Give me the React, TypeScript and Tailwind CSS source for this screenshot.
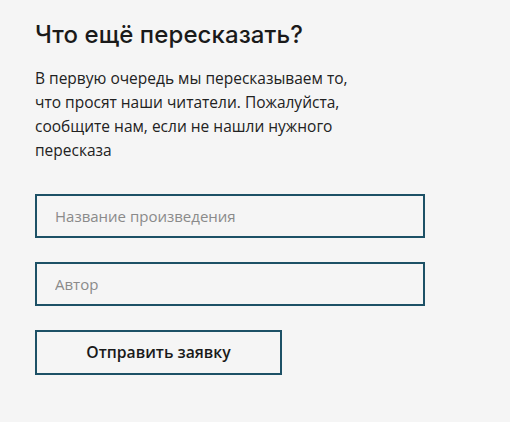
export default function App() {
  return (
    <div className="min-h-[422px] w-full bg-[#f5f5f5] px-[35px] pt-[20px] font-['Open_Sans',sans-serif]">
      <h2 className="font-['Inter',sans-serif] text-[24px] font-medium leading-[30px] tracking-[0.1px] text-[#1a1a1a]">
        Что ещё пересказать?
      </h2>
      <p className="mt-[16px] w-[330px] text-[15.5px] leading-[24px] text-[#222]">
        В первую очередь мы пересказываем то, что просят наши читатели.
        Пожалуйста, сообщите нам, если не нашли нужного пересказа
      </p>
      <form className="mt-[32px] flex flex-col" onSubmit={(e) => e.preventDefault()}>
        <input
          type="text"
          placeholder="Название произведения"
          className="h-[44px] w-[390px] border-2 border-[#1d5166] bg-[#f5f5f5] px-[18px] text-[15px] text-[#222] outline-none placeholder:text-[#8a8a8a]"
        />
        <input
          type="text"
          placeholder="Автор"
          className="mt-[24px] h-[44px] w-[390px] border-2 border-[#1d5166] bg-[#f5f5f5] px-[18px] text-[15px] text-[#222] outline-none placeholder:text-[#8a8a8a]"
        />
        <button
          type="submit"
          className="mt-[24px] h-[45px] w-[247px] border-2 border-[#1d5166] bg-[#f5f5f5] text-[15.75px] font-semibold text-[#1a1a1a]"
        >
          Отправить заявку
        </button>
      </form>
    </div>
  );
}
